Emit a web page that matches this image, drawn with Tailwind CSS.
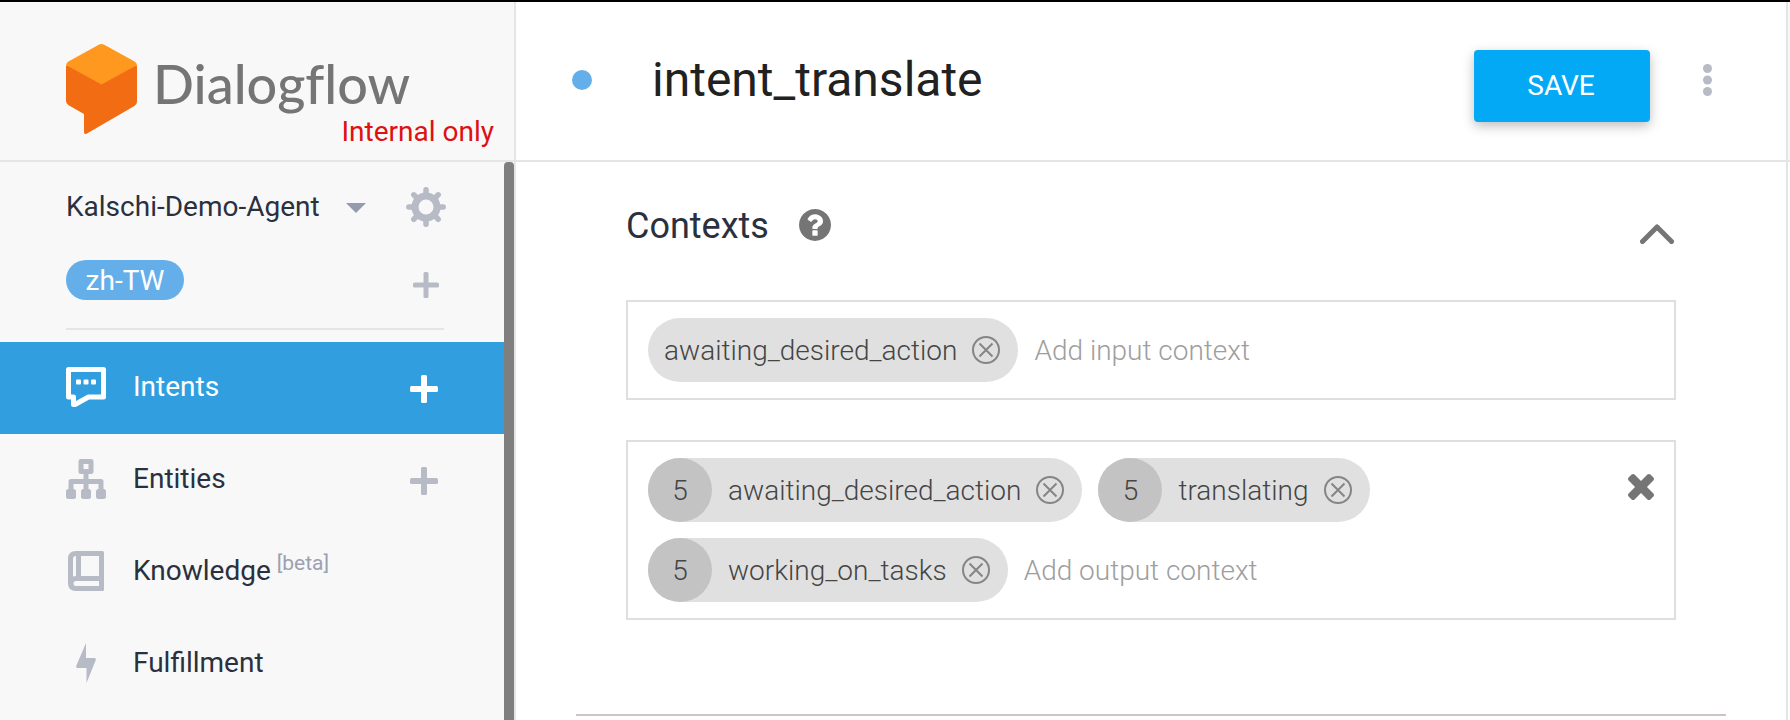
<!DOCTYPE html>
<html lang="en">
<head>
<meta charset="utf-8">
<title>Dialogflow - intent_translate</title>
<script src="https://cdn.jsdelivr.net/npm/@tailwindcss/browser@4"></script>
</head>
<body class="flex min-h-screen flex-col border-t-2 border-black bg-white font-[Roboto,sans-serif] text-[28px] leading-8 text-[#2b303f]">
<div class="flex flex-1">

  <aside class="flex w-[516px] shrink-0 flex-col border-r-2 border-[#e5e5e5] bg-[#f8f8f8]">
    <header class="relative flex h-40 items-start gap-4 border-b-2 border-[#e5e5e5] pt-[42px] pl-[66px]">
      <svg class="h-[90px] w-[71px] shrink-0" viewBox="0 0 71 90" aria-hidden="true">
        <path fill="#f26c13" d="M0 21.500 35.500 24 71 21.500V57.500Q71 60.500 68.400 62L21 89.400Q18 91 18 88V70L2.600 61.200Q0 59.700 0 57Z"/>
        <path fill="#ff981f" d="M33.200.6Q35.500-.6 37.800.6L68.600 17.600Q70.400 18.800 71 21L35.500 40.500 0 21Q.6 18.800 2.400 17.600Z"/>
      </svg>
      <span class="pt-1 font-[Lato,sans-serif] text-[54px] leading-[72px] font-medium text-[#757575] [font-variant-ligatures:none]">Dialogflow</span>
      <span class="absolute right-5 bottom-3 text-[#dd1111]">Internal only</span>
    </header>

    <div class="flex flex-1">
      <div class="flex-1">
        <div class="mr-[60px] ml-[66px] flex h-[168px] flex-col border-b-2 border-[#e5e5e5]">
          <div class="mt-6 flex h-[42px] items-center justify-between">
            <div class="relative flex items-center">
              <select aria-label="Agent" class="appearance-none bg-transparent pr-[46px] outline-none">
                <option>Kalschi-Demo-Agent</option>
              </select>
              <svg class="pointer-events-none absolute right-0 mt-0.5 h-2.5 w-5" viewBox="0 0 20 10" fill="#949bac" aria-hidden="true"><path d="M0 0H20L10 10Z"/></svg>
            </div>
            <button aria-label="Agent settings" class="-mr-0.5">
              <svg class="size-10" viewBox="0 0 40 40" fill="none" stroke="#b7bbc5" aria-hidden="true">
                <circle cx="20" cy="20" r="11" stroke-width="7"/>
                <path stroke-width="5.500" stroke-linecap="round" d="M20 7V2.800M20 33V37.200M7 20H2.800M33 20H37.200M10.500 10.500 7.800 7.800M29.500 10.500 32.200 7.800M10.500 29.500 7.800 32.200M29.500 29.500 32.200 32.200"/>
              </svg>
            </button>
          </div>
          <div class="mt-8 flex h-10 items-center justify-between">
            <button class="h-10 w-[118px] rounded-full bg-[#64afe9] pt-0.5 text-center text-white">zh-TW</button>
            <button aria-label="Add language" class="mr-[5px] pt-2.5">
              <svg class="size-[26px]" viewBox="0 0 26 26" fill="#b7bbc5" aria-hidden="true"><rect x="10.500" width="5" height="26" rx="1.500"/><rect y="10.500" width="26" height="5" rx="1.500"/></svg>
            </button>
          </div>
        </div>

        <nav class="mt-3">
          <div class="flex h-[92px] items-center bg-[#319fdf] pr-[66px] pb-0.5 pl-[66px] text-white">
            <a href="#intents" class="flex flex-1 items-center gap-[27px]">
              <svg class="size-10" viewBox="0 0 40 40" aria-hidden="true">
                <path fill="none" stroke="#fff" stroke-width="5" stroke-linejoin="round" d="M2.500 2.500H37.500V30H22.500L9 37.500H7.500V30H2.500Z"/>
                <g fill="#fff"><rect x="10" y="12.500" width="5" height="5" rx="1"/><rect x="17.500" y="12.500" width="5" height="5" rx="1"/><rect x="25" y="12.500" width="5" height="5" rx="1"/></g>
              </svg>
              Intents
            </a>
            <button aria-label="Create intent" class="pt-1">
              <svg class="size-7" viewBox="0 0 28 28" fill="#fff" aria-hidden="true"><rect x="11" width="6" height="28" rx="1.500"/><rect y="11" width="28" height="6" rx="1.500"/></svg>
            </button>
          </div>
          <div class="flex h-[92px] items-center pr-[66px] pb-0.5 pl-[66px]">
            <a href="#entities" class="flex flex-1 items-center gap-[27px]">
              <svg class="size-10" viewBox="0 0 40 40" aria-hidden="true">
                <path fill="none" stroke="#b7bbc5" stroke-width="5" stroke-linejoin="round" d="M15 2.500H25V12.500H15ZM20 13V33M5 34V22.500H35V34"/>
                <g fill="#b7bbc5"><rect y="30" width="10" height="10" rx="2.500"/><rect x="15" y="30" width="10" height="10" rx="2.500"/><rect x="30" y="30" width="10" height="10" rx="2.500"/></g>
              </svg>
              Entities
            </a>
            <button aria-label="Create entity" class="pt-1">
              <svg class="size-7" viewBox="0 0 28 28" fill="#b7bbc5" aria-hidden="true"><rect x="11" width="6" height="28" rx="1.500"/><rect y="11" width="28" height="6" rx="1.500"/></svg>
            </button>
          </div>
          <a href="#knowledge" class="flex h-[92px] items-center gap-[27px] pb-0.5 pl-[66px]">
            <svg class="size-10" viewBox="0 0 40 40" aria-hidden="true">
              <path fill="#b7bbc5" fill-rule="evenodd" d="M10 0H36.500Q38 0 38 1.500V38.500Q38 40 36.500 40H10Q2 40 2 32V8Q2 0 10 0ZM10 5Q7 5 7 8V25.500Q8.500 25 10 25ZM15 5V25H33V5ZM10 30Q7.500 30 7.500 32.500T10 35H33V30Z"/>
            </svg>
            <span class="flex items-start gap-1.5">Knowledge <span class="text-[21px] leading-4 text-[#9ba0b2]">[beta]</span></span>
          </a>
          <a href="#fulfillment" class="flex h-[92px] items-center gap-[27px] pb-0.5 pl-[66px]">
            <svg class="size-10" viewBox="0 0 40 40" fill="#b7bbc5" aria-hidden="true"><path d="M20 0V15H28.500Q30.500 15 29.800 17L20.500 40V25H11.500Q9.500 25 10.200 23Z"/></svg>
            Fulfillment
          </a>
        </nav>
      </div>
      <div class="w-2.5 rounded-t-[4px] bg-[#7f7f7f]"></div>
    </div>
  </aside>

  <main class="flex min-w-0 flex-1 flex-col border-r-2 border-[#e5e5e5]">
    <header class="flex h-40 items-center border-b-2 border-[#e5e5e5] pr-[74px] pb-0.5 pl-14">
      <span class="size-5 shrink-0 rounded-full bg-[#64afe9]"></span>
      <input aria-label="Intent name" value="intent_translate" class="mb-0.5 ml-[60px] h-16 min-w-0 flex-1 bg-transparent text-5xl text-[#212121] outline-none">
      <button class="mt-3 h-[72px] w-44 rounded-[4px] bg-[#03a9f4] pr-0.5 text-white shadow-[0_4px_12px_rgba(0,0,0,0.26)]">SAVE</button>
      <button aria-label="More options" class="ml-[53px]">
        <svg class="h-8 w-[9px]" viewBox="0 0 9 32" fill="#b7bbc5" aria-hidden="true"><circle cx="4.500" cy="4.500" r="4.500"/><circle cx="4.500" cy="16" r="4.500"/><circle cx="4.500" cy="27.500" r="4.500"/></svg>
      </button>
    </header>

    <section class="mx-[60px] flex h-[554px] flex-col border-b-2 border-[#ccc5c3] pr-[50px] pl-[50px]">
      <div class="flex h-[138px] items-center pb-2.5">
        <h2 class="text-4xl">Contexts</h2>
        <button aria-label="Help" class="mb-0.5 ml-[30px]">
          <svg class="size-8" viewBox="0 0 1536 1536" fill="#757575" aria-hidden="true"><path d="M896 1248v-192q0-14-9-23t-23-9H672q-14 0-23 9t-9 23v192q0 14 9 23t23 9h192q14 0 23-9t9-23zm256-672q0-88-55.500-163T958 297t-170-41q-243 0-371 213-15 24 8 42l132 100q7 6 19 6 16 0 25-12 53-68 86-92 34-24 86-24 48 0 85.500 26t37.500 59q0 38-20 61t-68 45q-63 28-115.500 86.500T640 892v36q0 14 9 23t23 9h192q14 0 23-9t9-23q0-19 21.500-49.500T972 829q32-18 49-28.500t46-35 44.500-48 28-60.500 12.500-81zm384 192q0 209-103 385.500T1153.500 1433 768 1536t-385.500-103T103 1153.500 0 768t103-385.500T382.500 103 768 0t385.500 103T1433 382.500 1536 768z"/></svg>
        </button>
        <button aria-label="Collapse contexts" class="mt-4 mr-0.5 ml-auto">
          <svg class="h-5 w-[34px]" viewBox="0 0 34 20" fill="none" stroke="#757575" stroke-width="5" stroke-linecap="round" aria-hidden="true"><path stroke-linejoin="round" d="M2.500 17.500 17 3 31.500 17.500"/></svg>
        </button>
      </div>

      <div class="flex border-2 border-[#dfdfdf] px-5 py-4 font-light text-[#454545]">
        <div class="flex flex-1 flex-wrap gap-4">
          <div class="flex h-16 items-center rounded-full bg-[#e0e0e0] pr-[18px] pl-4">
            <span class="pt-0.5">awaiting_desired_action</span>
            <button aria-label="Remove awaiting_desired_action" class="ml-[15px]"><svg class="size-7" viewBox="0 0 28 28" fill="none" stroke="#858585" stroke-width="2" aria-hidden="true"><circle cx="14" cy="14" r="13"/><path d="M7.500 7.500 20.500 20.500M20.500 7.500 7.500 20.500"/></svg></button>
          </div>
          <input aria-label="Add input context" placeholder="Add input context" class="h-16 min-w-60 flex-1 bg-transparent outline-none placeholder:text-[#9e9e9e]">
        </div>
      </div>

      <div class="mt-10 flex border-2 border-[#dfdfdf] px-5 py-4 font-light text-[#454545]">
        <div class="flex flex-1 flex-wrap gap-4">
          <div class="flex h-16 items-center rounded-full bg-[#e0e0e0] pr-[18px]">
            <span class="flex size-16 items-center justify-center rounded-full bg-[#c3c3c3] pt-0.5">5</span>
            <span class="ml-4 pt-0.5">awaiting_desired_action</span>
            <button aria-label="Remove awaiting_desired_action" class="ml-[15px]"><svg class="size-7" viewBox="0 0 28 28" fill="none" stroke="#858585" stroke-width="2" aria-hidden="true"><circle cx="14" cy="14" r="13"/><path d="M7.500 7.500 20.500 20.500M20.500 7.500 7.500 20.500"/></svg></button>
          </div>
          <div class="flex h-16 items-center rounded-full bg-[#e0e0e0] pr-[18px]">
            <span class="flex size-16 items-center justify-center rounded-full bg-[#c3c3c3] pt-0.5">5</span>
            <span class="ml-4 pt-0.5">translating</span>
            <button aria-label="Remove translating" class="ml-[15px]"><svg class="size-7" viewBox="0 0 28 28" fill="none" stroke="#858585" stroke-width="2" aria-hidden="true"><circle cx="14" cy="14" r="13"/><path d="M7.500 7.500 20.500 20.500M20.500 7.500 7.500 20.500"/></svg></button>
          </div>
          <div class="flex h-16 items-center rounded-full bg-[#e0e0e0] pr-[18px]">
            <span class="flex size-16 items-center justify-center rounded-full bg-[#c3c3c3] pt-0.5">5</span>
            <span class="ml-4 pt-0.5">working_on_tasks</span>
            <button aria-label="Remove working_on_tasks" class="ml-[15px]"><svg class="size-7" viewBox="0 0 28 28" fill="none" stroke="#858585" stroke-width="2" aria-hidden="true"><circle cx="14" cy="14" r="13"/><path d="M7.500 7.500 20.500 20.500M20.500 7.500 7.500 20.500"/></svg></button>
          </div>
          <input aria-label="Add output context" placeholder="Add output context" class="h-16 min-w-60 flex-1 bg-transparent outline-none placeholder:text-[#9e9e9e]">
        </div>
        <button aria-label="Clear output contexts" class="mt-4 self-start">
          <svg class="size-[26px]" viewBox="302 366 1188 1188" fill="#757575" aria-hidden="true"><path d="M1490 1322q0 40-28 68l-136 136q-28 28-68 28t-68-28l-294-294-294 294q-28 28-68 28t-68-28l-136-136q-28-28-28-68t28-68l294-294-294-294q-28-28-28-68t28-68l136-136q28-28 68-28t68 28l294 294 294-294q28-28 68-28t68 28l136 136q28 28 28 68t-28 68l-294 294 294 294q28 28 28 68z"/></svg>
        </button>
      </div>
    </section>
  </main>

  <div class="w-0.5 shrink-0">
    <div class="h-40 border-b-2 border-[#e5e5e5] bg-[#f8f8f8]"></div>
  </div>
</div>
</body>
</html>
